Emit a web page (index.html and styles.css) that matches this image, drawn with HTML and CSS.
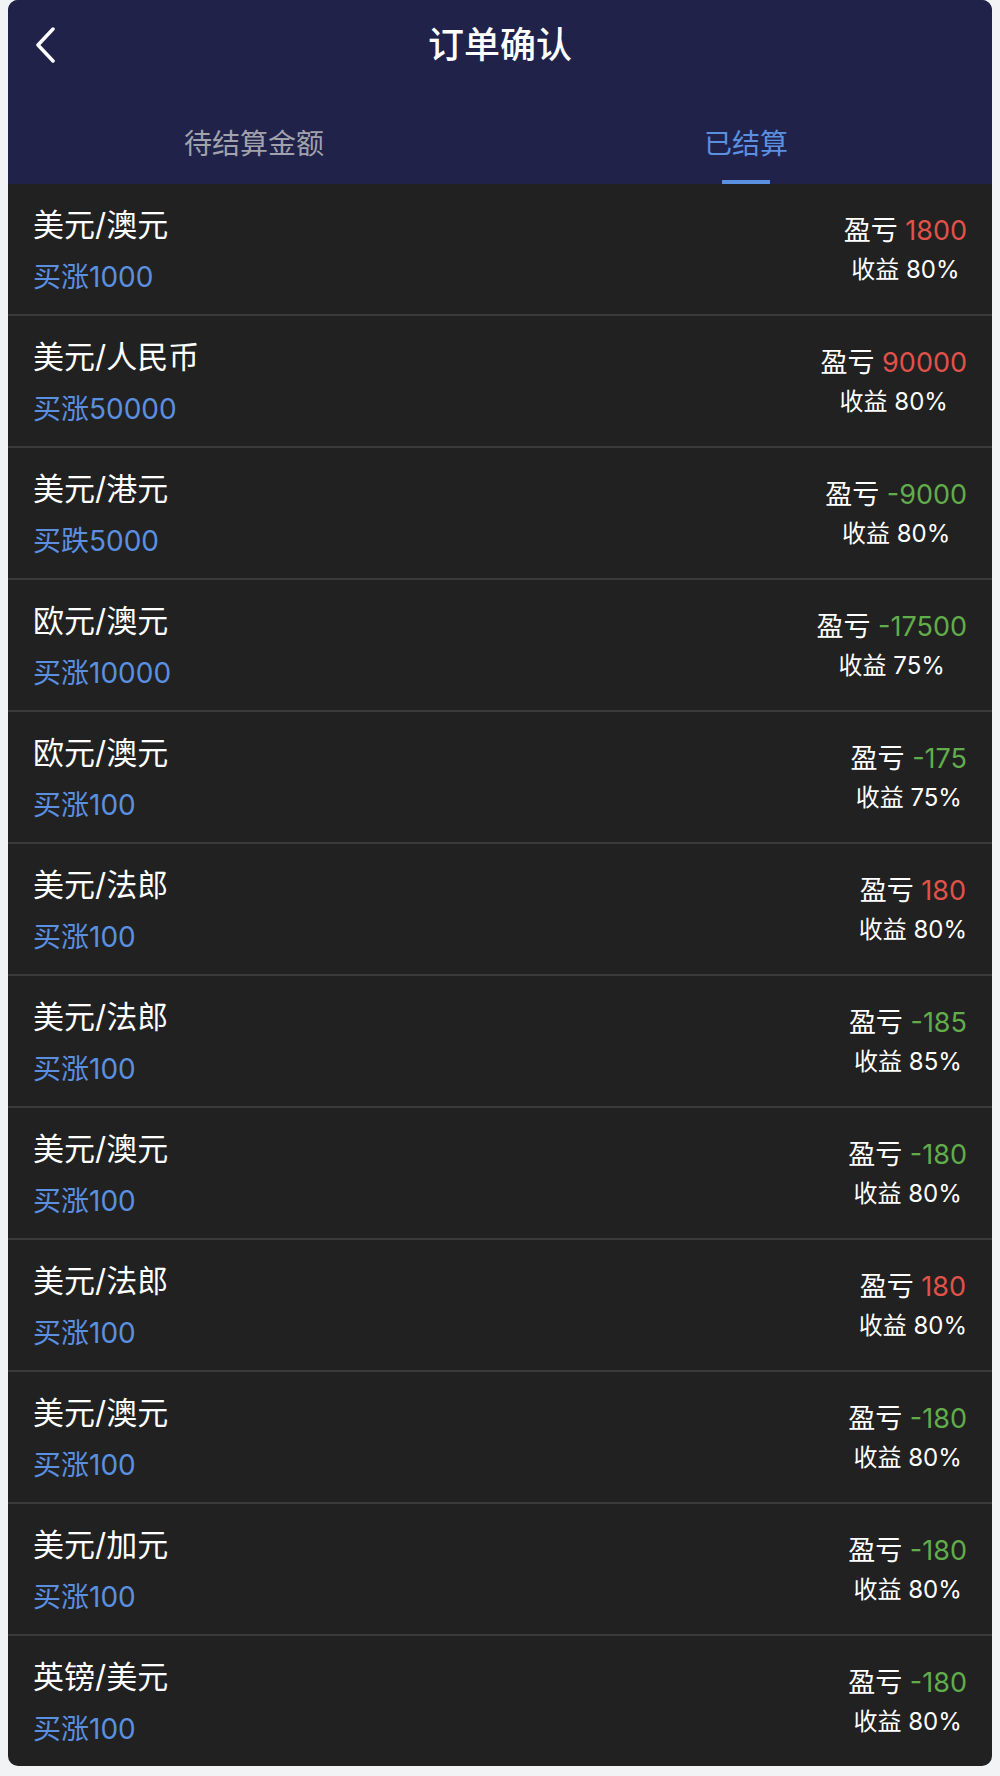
FILE: index.html
```html
<!DOCTYPE html>
<html lang="zh-CN">
  <head>
    <meta charset="UTF-8" />
    <meta name="viewport" content="width=device-width, initial-scale=1.0" />
    <title>订单确认</title>
    <link rel="stylesheet" href="styles.css">
  </head>
  <body>
    <div class="app">
      <div class="header">
        <div class="nav-bar">
          <a href="#" class="back">
            <svg width="22" height="36" viewBox="0 0 22 36">
              <path d="M19 2 L4 18 L19 34" fill="none" stroke="#fff" stroke-width="3.5" stroke-linecap="round" stroke-linejoin="round" />
            </svg>
          </a>
          <h1 class="title">订单确认</h1>
          <span></span>
        </div>
        <ul class="tabs">
          <li class="tab">待结算金额</li>
          <li class="tab active">已结算<span class="tab-line"></span></li>
        </ul>
      </div>

      <ul class="orders">
        <li class="order">
          <div class="order-left">
            <p class="pair">美元/澳元</p>
            <p class="amount">买涨1000</p>
          </div>
          <div class="order-right">
            <p class="profit">盈亏 <span class="up">1800</span></p>
            <p class="rate">收益 80%</p>
          </div>
        </li>
        <li class="order">
          <div class="order-left">
            <p class="pair">美元/人民币</p>
            <p class="amount">买涨50000</p>
          </div>
          <div class="order-right">
            <p class="profit">盈亏 <span class="up">90000</span></p>
            <p class="rate">收益 80%</p>
          </div>
        </li>
        <li class="order">
          <div class="order-left">
            <p class="pair">美元/港元</p>
            <p class="amount">买跌5000</p>
          </div>
          <div class="order-right">
            <p class="profit">盈亏 <span class="down">-9000</span></p>
            <p class="rate">收益 80%</p>
          </div>
        </li>
        <li class="order">
          <div class="order-left">
            <p class="pair">欧元/澳元</p>
            <p class="amount">买涨10000</p>
          </div>
          <div class="order-right">
            <p class="profit">盈亏 <span class="down">-17500</span></p>
            <p class="rate">收益 75%</p>
          </div>
        </li>
        <li class="order">
          <div class="order-left">
            <p class="pair">欧元/澳元</p>
            <p class="amount">买涨100</p>
          </div>
          <div class="order-right">
            <p class="profit">盈亏 <span class="down">-175</span></p>
            <p class="rate">收益 75%</p>
          </div>
        </li>
        <li class="order">
          <div class="order-left">
            <p class="pair">美元/法郎</p>
            <p class="amount">买涨100</p>
          </div>
          <div class="order-right">
            <p class="profit">盈亏 <span class="up">180</span></p>
            <p class="rate">收益 80%</p>
          </div>
        </li>
        <li class="order">
          <div class="order-left">
            <p class="pair">美元/法郎</p>
            <p class="amount">买涨100</p>
          </div>
          <div class="order-right">
            <p class="profit">盈亏 <span class="down">-185</span></p>
            <p class="rate">收益 85%</p>
          </div>
        </li>
        <li class="order">
          <div class="order-left">
            <p class="pair">美元/澳元</p>
            <p class="amount">买涨100</p>
          </div>
          <div class="order-right">
            <p class="profit">盈亏 <span class="down">-180</span></p>
            <p class="rate">收益 80%</p>
          </div>
        </li>
        <li class="order">
          <div class="order-left">
            <p class="pair">美元/法郎</p>
            <p class="amount">买涨100</p>
          </div>
          <div class="order-right">
            <p class="profit">盈亏 <span class="up">180</span></p>
            <p class="rate">收益 80%</p>
          </div>
        </li>
        <li class="order">
          <div class="order-left">
            <p class="pair">美元/澳元</p>
            <p class="amount">买涨100</p>
          </div>
          <div class="order-right">
            <p class="profit">盈亏 <span class="down">-180</span></p>
            <p class="rate">收益 80%</p>
          </div>
        </li>
        <li class="order">
          <div class="order-left">
            <p class="pair">美元/加元</p>
            <p class="amount">买涨100</p>
          </div>
          <div class="order-right">
            <p class="profit">盈亏 <span class="down">-180</span></p>
            <p class="rate">收益 80%</p>
          </div>
        </li>
        <li class="order">
          <div class="order-left">
            <p class="pair">英镑/美元</p>
            <p class="amount">买涨100</p>
          </div>
          <div class="order-right">
            <p class="profit">盈亏 <span class="down">-180</span></p>
            <p class="rate">收益 80%</p>
          </div>
        </li>
      </ul>
    </div>
  </body>
</html>
```

FILE: styles.css
```css
body {
  font-family: Inter, "Noto Sans CJK SC", sans-serif;
  margin: 0;
  padding: 0;
  background-color: #f2f3f5;
}

ul {
  list-style: none;
  padding: 0;
  margin: 0;
}

p {
  margin: 0;
}

.app {
  margin: 0 8px;
  border-radius: 10px;
  overflow: hidden;
  background-color: #212121;
}

.header {
  background-color: #20224a;
}

.nav-bar {
  display: grid;
  grid-template-columns: 1fr auto 1fr;
  align-items: center;
  height: 90px;
}

.back {
  display: flex;
  padding-left: 26px;
}

.title {
  margin: 0;
  color: #fff;
  font-size: 36px;
  font-weight: 500;
  line-height: 44px;
}

.tabs {
  display: flex;
  height: 94px;
}

.tab {
  flex: 1;
  display: flex;
  flex-direction: column;
  align-items: center;
  padding-top: 34px;
  color: #a2a2ac;
  font-size: 28px;
  line-height: 40px;
}

.tab.active {
  color: #5b8fe0;
}

.tab-line {
  width: 48px;
  height: 4px;
  margin-top: 16px;
  background-color: #5b8fe0;
}

.order {
  display: flex;
  justify-content: space-between;
  align-items: flex-start;
  height: 132px;
  padding: 21px 25px 0;
  box-sizing: border-box;
  border-bottom: 2px solid #3a3a3a;
}

.order:last-child {
  height: 130px;
  border-bottom: none;
}

.pair {
  color: #fff;
  font-size: 31px;
  line-height: 40px;
}

.amount {
  margin-top: 14px;
  color: #5b8fe0;
  font-size: 28px;
  line-height: 36px;
}

.order-right {
  margin-top: 8px;
  text-align: center;
  color: #fff;
}

.profit {
  font-size: 27px;
  line-height: 36px;
}

.rate {
  margin-top: 5px;
  font-size: 24px;
  line-height: 32px;
}

.up {
  color: #e0524a;
}

.down {
  color: #62ad4b;
}
```
